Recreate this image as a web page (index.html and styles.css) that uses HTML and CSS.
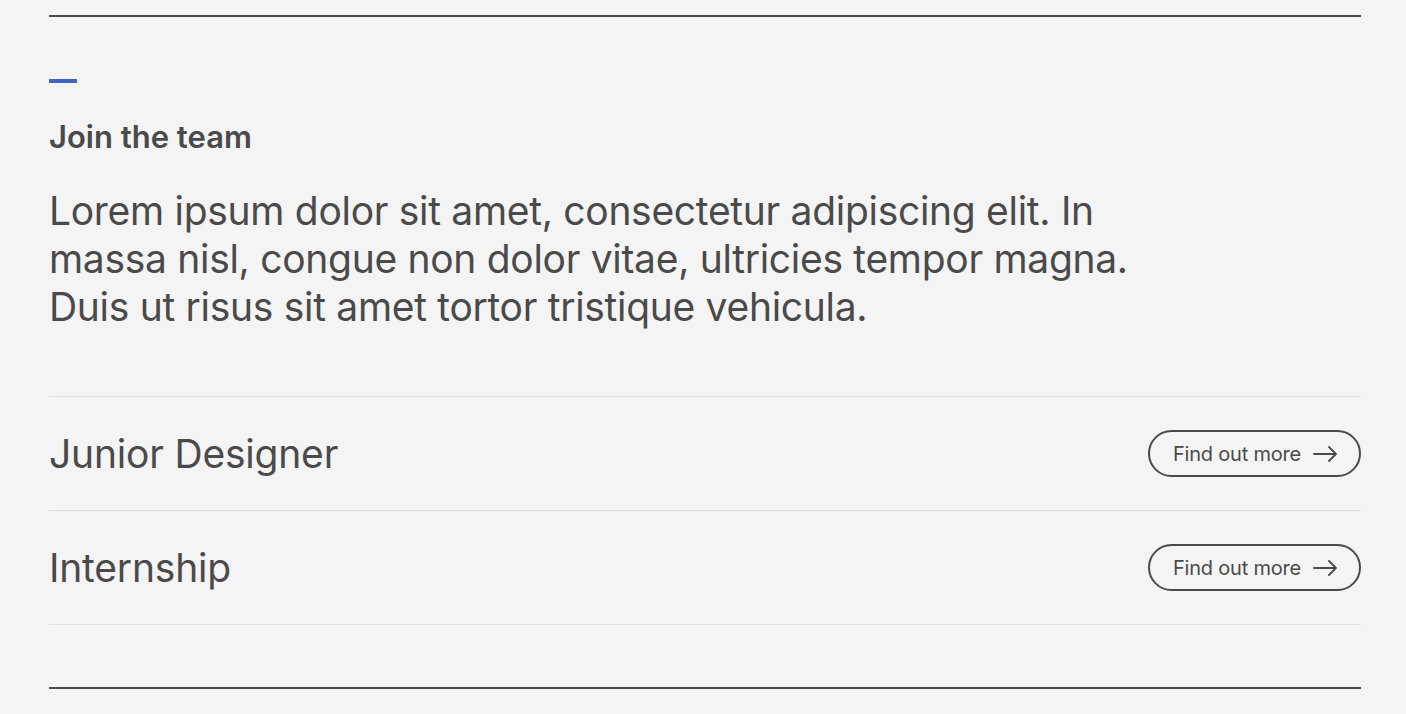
FILE: index.html
```html
<!DOCTYPE html>
<html lang="en">
<head>
<meta charset="utf-8">
<title>Join the team</title>
<link rel="stylesheet" href="styles.css">
</head>
<body>
<section class="section">
  <hr class="rule">
  <div class="content">
    <span class="accent"></span>
    <h2 class="eyebrow">Join the team</h2>
    <p class="lead">Lorem ipsum dolor sit amet, consectetur adipiscing elit. In massa nisl, congue non dolor vitae, ultricies tempor magna. Duis ut risus sit amet tortor tristique vehicula.</p>
    <ul class="jobs">
      <li class="job">
        <span class="job-title">Junior Designer</span>
        <a class="btn" href="#">Find out more
          <svg class="arrow" width="24" height="16" viewBox="0 0 24 16" fill="none" stroke="currentColor" stroke-width="1.8" stroke-linecap="round" stroke-linejoin="round"><path d="M1 8h22M16 1l7 7-7 7"/></svg>
        </a>
      </li>
      <li class="job">
        <span class="job-title">Internship</span>
        <a class="btn" href="#">Find out more
          <svg class="arrow" width="24" height="16" viewBox="0 0 24 16" fill="none" stroke="currentColor" stroke-width="1.8" stroke-linecap="round" stroke-linejoin="round"><path d="M1 8h22M16 1l7 7-7 7"/></svg>
        </a>
      </li>
    </ul>
  </div>
  <hr class="rule bottom">
</section>
</body>
</html>
```
FILE: styles.css
```css
html, body {
  margin: 0;
  padding: 0;
  background: #f4f4f4;
}
body {
  font-family: Inter, "Noto Sans", sans-serif;
  color: #4a4a4a;
}
.section {
  padding: 15px 45px 0 49px;
}
.rule {
  margin: 0;
  border: 0;
  height: 2px;
  background: #4a4a4a;
}
.content {
  padding-top: 62px;
}
.accent {
  display: block;
  width: 28px;
  height: 4px;
  background: #3f66c4;
}
.eyebrow {
  margin: 37px 0 0;
  font-size: 31px;
  line-height: 34px;
  font-weight: 600;
  letter-spacing: 0;
}
.lead {
  margin: 33px 0 0;
  max-width: 1090px;
  font-size: 39px;
  line-height: 48px;
  font-weight: 400;
  letter-spacing: -0.3px;
}
.jobs {
  list-style: none;
  margin: 65px 0 0;
  padding: 0;
  border-top: 1px solid #e0e0e0;
}
.job {
  display: flex;
  align-items: center;
  justify-content: space-between;
  height: 113px;
  border-bottom: 1px solid #e0e0e0;
}
.job-title {
  font-size: 39px;
  font-weight: 400;
  letter-spacing: -0.2px;
}
.btn {
  display: inline-flex;
  align-items: center;
  gap: 12px;
  height: 47px;
  box-sizing: border-box;
  padding: 0 22px 0 23px;
  border: 2px solid #4a4a4a;
  border-radius: 24px;
  color: #4a4a4a;
  text-decoration: none;
  font-size: 20px;
  letter-spacing: -0.2px;
}
.arrow {
  display: block;
}
.bottom {
  margin-top: 62px;
}
```
